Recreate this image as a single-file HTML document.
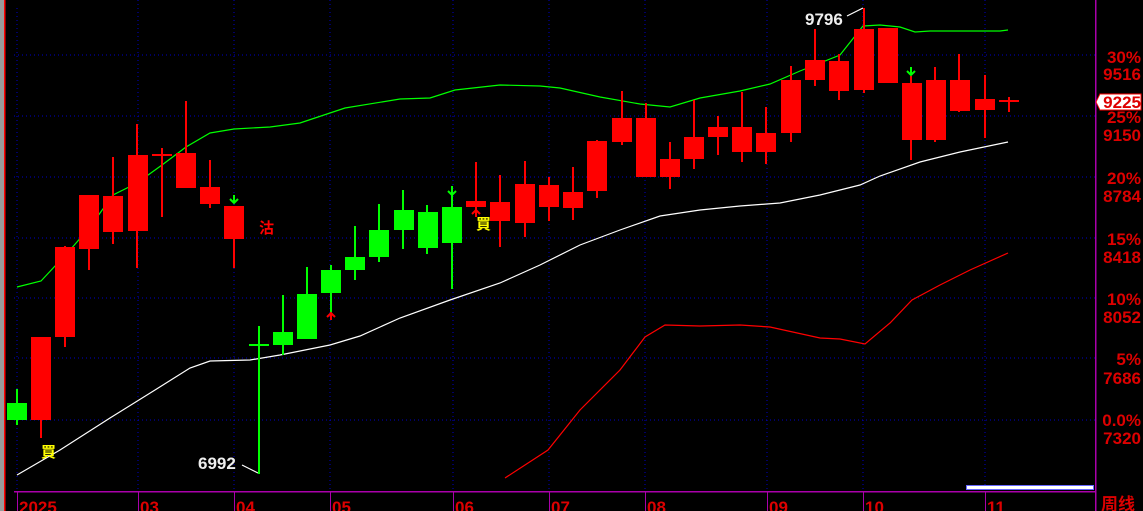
<!DOCTYPE html>
<html><head><meta charset="utf-8"><style>
html,body{margin:0;padding:0;background:#000;width:1143px;height:511px;overflow:hidden}
svg{display:block}
text{font-family:"Liberation Sans","Noto Sans CJK SC",sans-serif;font-weight:bold}
</style></head><body>
<svg width="1143" height="511" xmlns="http://www.w3.org/2000/svg" shape-rendering="crispEdges">
<rect width="1143" height="511" fill="#000"/>
<rect x="0" y="0" width="4" height="511" fill="#999"/>
<rect x="4" y="0" width="1.5" height="511" fill="#f00"/>
<g stroke="#0000c8" stroke-width="1" stroke-dasharray="1 3">
<line x1="14" y1="55" x2="1095" y2="55"/><line x1="14" y1="116" x2="1095" y2="116"/>
<line x1="14" y1="177" x2="1095" y2="177"/><line x1="14" y1="238" x2="1095" y2="238"/>
<line x1="14" y1="298" x2="1095" y2="298"/><line x1="14" y1="358" x2="1095" y2="358"/>
<line x1="14" y1="420" x2="1095" y2="420"/>
<line x1="17" y1="8" x2="17" y2="491"/><line x1="138" y1="0" x2="138" y2="491"/><line x1="234" y1="0" x2="234" y2="491"/>
<line x1="330" y1="0" x2="330" y2="491"/><line x1="453" y1="0" x2="453" y2="491"/><line x1="549" y1="0" x2="549" y2="491"/>
<line x1="645" y1="0" x2="645" y2="491"/><line x1="767" y1="0" x2="767" y2="491"/><line x1="863" y1="0" x2="863" y2="491"/>
<line x1="985" y1="0" x2="985" y2="491"/>
</g>
<g fill="none" stroke-width="1.2" shape-rendering="auto">
<polyline stroke="#0f0" points="17,287 41,281 70,250 90,227 113,195 137,183 162,165 186,147 210,133 234,129 270,127 300,123 345,108 400,99 430,98 455,90 500,85 540,86 560,88 600,97 640,104 670,107 700,98 740,91 770,84 800,71 840,55 863,26 880,25 900,27 915,32 930,31 1000,31 1008,30"/>
<polyline stroke="#fff" points="17,475 60,450 110,418 155,390 190,368 210,361 250,360 280,355 330,345 360,336 400,318 450,300 500,283 540,265 580,245 620,230 660,216 700,210 740,206 780,203 820,195 860,185 880,176 920,162 960,152 1008,142"/>
<polyline stroke="#f00" points="505,478 548,450 580,410 620,370 645,337 665,325 700,326 740,325 770,327 820,338 840,339 865,344 890,323 912,300 940,285 970,270 1008,253"/>
<line stroke="#fff" x1="847" y1="16" x2="863" y2="8"/>
<line stroke="#fff" x1="242" y1="465" x2="258" y2="473"/>
</g>
<g fill="#f00" stroke="#f00" stroke-width="2">
<line x1="41" y1="337" x2="41" y2="438"/><rect x="31" y="337" width="20" height="83" stroke="none"/>
<line x1="65" y1="246" x2="65" y2="347"/><rect x="55" y="247" width="20" height="90" stroke="none"/>
<line x1="89" y1="195" x2="89" y2="270"/><rect x="79" y="195" width="20" height="54" stroke="none"/>
<line x1="113" y1="157" x2="113" y2="244"/><rect x="103" y="196" width="20" height="36" stroke="none"/>
<line x1="137" y1="124" x2="137" y2="268"/><rect x="128" y="155" width="20" height="76" stroke="none"/>
<line x1="162" y1="148" x2="162" y2="217"/><line x1="152" y1="155" x2="172" y2="155"/>
<line x1="186" y1="101" x2="186" y2="160"/><rect x="176" y="153" width="20" height="35" stroke="none"/>
<line x1="210" y1="160" x2="210" y2="208"/><rect x="200" y="187" width="20" height="17" stroke="none"/>
<line x1="234" y1="206" x2="234" y2="268"/><rect x="224" y="206" width="20" height="33" stroke="none"/>
<line x1="476" y1="162" x2="476" y2="217"/><rect x="466" y="201" width="20" height="6" stroke="none"/>
<line x1="500" y1="175" x2="500" y2="247"/><rect x="490" y="202" width="20" height="19" stroke="none"/>
<line x1="525" y1="161" x2="525" y2="237"/><rect x="515" y="184" width="20" height="39" stroke="none"/>
<line x1="549" y1="177" x2="549" y2="221"/><rect x="539" y="185" width="20" height="22" stroke="none"/>
<line x1="573" y1="167" x2="573" y2="220"/><rect x="563" y="192" width="20" height="16" stroke="none"/>
<line x1="597" y1="140" x2="597" y2="198"/><rect x="587" y="141" width="20" height="50" stroke="none"/>
<line x1="622" y1="91" x2="622" y2="145"/><rect x="612" y="118" width="20" height="24" stroke="none"/>
<line x1="646" y1="103" x2="646" y2="177"/><rect x="636" y="118" width="20" height="59" stroke="none"/>
<line x1="670" y1="142" x2="670" y2="189"/><rect x="660" y="159" width="20" height="18" stroke="none"/>
<line x1="694" y1="100" x2="694" y2="169"/><rect x="684" y="137" width="20" height="22" stroke="none"/>
<line x1="718" y1="116" x2="718" y2="155"/><rect x="708" y="127" width="20" height="10" stroke="none"/>
<line x1="742" y1="92" x2="742" y2="162"/><rect x="732" y="127" width="20" height="25" stroke="none"/>
<line x1="766" y1="107" x2="766" y2="164"/><rect x="756" y="133" width="20" height="19" stroke="none"/>
<line x1="791" y1="66" x2="791" y2="142"/><rect x="781" y="80" width="20" height="53" stroke="none"/>
<line x1="815" y1="29" x2="815" y2="86"/><rect x="805" y="60" width="20" height="20" stroke="none"/>
<line x1="839" y1="54" x2="839" y2="100"/><rect x="829" y="61" width="20" height="30" stroke="none"/>
<line x1="864" y1="8" x2="864" y2="93"/><rect x="854" y="29" width="20" height="61" stroke="none"/>
<rect x="878" y="28" width="20" height="55" stroke="none"/>
<line x1="911" y1="76" x2="911" y2="160"/><rect x="902" y="83" width="20" height="57" stroke="none"/>
<line x1="935" y1="67" x2="935" y2="142"/><rect x="926" y="80" width="20" height="60" stroke="none"/>
<line x1="959" y1="54" x2="959" y2="112"/><rect x="950" y="80" width="20" height="31" stroke="none"/>
<line x1="985" y1="75" x2="985" y2="138"/><rect x="975" y="99" width="20" height="11" stroke="none"/>
<line x1="1009" y1="97" x2="1009" y2="112"/><line x1="999" y1="101" x2="1019" y2="101"/>
</g>
<g fill="#0f0" stroke="#0f0" stroke-width="2">
<line x1="17" y1="389" x2="17" y2="425"/><rect x="7" y="403" width="20" height="17" stroke="none"/>
<line x1="259" y1="326" x2="259" y2="474"/><line x1="249" y1="345" x2="269" y2="345"/>
<line x1="283" y1="295" x2="283" y2="355"/><rect x="273" y="332" width="20" height="13" stroke="none"/>
<line x1="307" y1="267" x2="307" y2="339"/><rect x="297" y="294" width="20" height="45" stroke="none"/>
<line x1="331" y1="265" x2="331" y2="320"/><rect x="321" y="270" width="20" height="23" stroke="none"/>
<line x1="355" y1="226" x2="355" y2="280"/><rect x="345" y="257" width="20" height="13" stroke="none"/>
<line x1="379" y1="204" x2="379" y2="262"/><rect x="369" y="230" width="20" height="27" stroke="none"/>
<line x1="403" y1="190" x2="403" y2="249"/><rect x="394" y="210" width="20" height="20" stroke="none"/>
<line x1="427" y1="205" x2="427" y2="254"/><rect x="418" y="212" width="20" height="36" stroke="none"/>
<line x1="452" y1="186" x2="452" y2="289"/><rect x="442" y="207" width="20" height="36" stroke="none"/>
</g>
<g shape-rendering="auto">
<path d="M234 195v7M230 199l4 4 4-4" stroke="#0f0" stroke-width="2" fill="none"/>
<path d="M452 187v7M448 191l4 4 4-4" stroke="#0f0" stroke-width="2" fill="none"/>
<path d="M911 67v7M907 71l4 4 4-4" stroke="#0f0" stroke-width="2" fill="none"/>
<path d="M331 320v-7M327 317l4-4 4 4" stroke="#f00" stroke-width="2" fill="none"/>
<path d="M476 217v-7M472 214l4-4 4 4" stroke="#f00" stroke-width="2" fill="none"/>
</g>
<text x="259" y="233" fill="#f00" font-size="15" font-family="Noto Sans CJK SC,sans-serif">沽</text>
<text x="476" y="229" fill="#ff0" font-size="15" font-family="Noto Sans CJK SC,sans-serif">買</text>
<text x="41" y="457" fill="#ff0" font-size="15" font-family="Noto Sans CJK SC,sans-serif">買</text>
<text x="805" y="25" fill="#eee" font-size="17">9796</text>
<text x="198" y="469" fill="#eee" font-size="17">6992</text>
<line x1="14" y1="491.5" x2="1095" y2="491.5" stroke="#a0a" stroke-width="1.5"/>
<line x1="1095.5" y1="0" x2="1095.5" y2="511" stroke="#a0a" stroke-width="1.5"/>
<g stroke="#a0a"><line x1="17.5" y1="491" x2="17.5" y2="511"/><line x1="138.5" y1="491" x2="138.5" y2="511"/><line x1="234.5" y1="491" x2="234.5" y2="511"/><line x1="330.5" y1="491" x2="330.5" y2="511"/><line x1="453.5" y1="491" x2="453.5" y2="511"/><line x1="549.5" y1="491" x2="549.5" y2="511"/><line x1="645.5" y1="491" x2="645.5" y2="511"/><line x1="767.5" y1="491" x2="767.5" y2="511"/><line x1="863.5" y1="491" x2="863.5" y2="511"/><line x1="985.5" y1="491" x2="985.5" y2="511"/></g>
<rect x="966.5" y="485.5" width="127" height="4" fill="#fff" stroke="#66f"/>
<g fill="#d00" font-size="17">
<text x="19" y="513">2025</text><text x="140" y="513">03</text><text x="236" y="513">04</text><text x="332" y="513">05</text><text x="455" y="513">06</text><text x="551" y="513">07</text><text x="647" y="513">08</text><text x="769" y="513">09</text><text x="865" y="513">10</text><text x="987" y="513">11</text>
<text x="1101" y="510" font-weight="normal" font-family="Noto Sans CJK SC,sans-serif" font-size="17">周线</text>
</g>
<g fill="#d00" font-size="17" text-anchor="end">
<text x="1141" y="63">30%</text><text x="1141" y="80">9516</text>
<text x="1141" y="123">25%</text><text x="1141" y="141">9150</text>
<text x="1141" y="184">20%</text><text x="1141" y="202">8784</text>
<text x="1141" y="245">15%</text><text x="1141" y="263">8418</text>
<text x="1141" y="305">10%</text><text x="1141" y="323">8052</text>
<text x="1141" y="365">5%</text><text x="1141" y="384">7686</text>
<text x="1141" y="426">0.0%</text><text x="1141" y="444">7320</text>
</g>
<path d="M1096 102 L1100 94 H1141 V110 H1100 Z" fill="#fff" stroke="#f00" stroke-width="1"/>
<text x="1141" y="108" fill="#d00" font-size="17" text-anchor="end">9225</text>
</svg>
</body></html>
